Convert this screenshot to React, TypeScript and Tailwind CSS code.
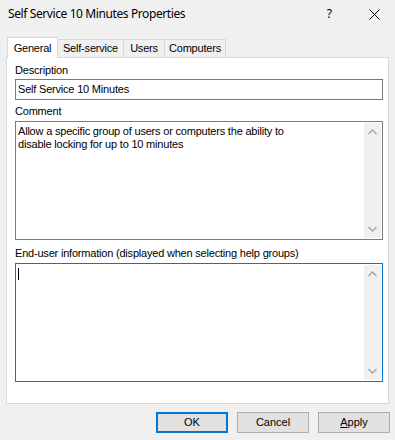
import type { ReactNode } from "react";

const uiFont = "font-['Liberation_Sans',Arial,sans-serif]";

function Chevron({ dir }: { dir: "up" | "down" }) {
  return (
    <svg width="9" height="6" viewBox="0 0 9 6" className="block">
      <polyline
        points={dir === "up" ? "0.5,5 4.5,1 8.5,5" : "0.5,1 4.5,5 8.5,1"}
        fill="none"
        stroke="#a3a3a3"
        strokeWidth="1.3"
      />
    </svg>
  );
}

function ScrollBar() {
  return (
    <div className="w-[17px] self-stretch bg-[#f0f0f0] flex flex-col items-center justify-between py-[6px]">
      <Chevron dir="up" />
      <Chevron dir="down" />
    </div>
  );
}

function TextArea({
  focused,
  children,
}: {
  focused?: boolean;
  children?: ReactNode;
}) {
  return (
    <div
      className={`h-[119px] w-[368px] bg-white border flex ${
        focused ? "border-[#0078d7]" : "border-[#7a7a7a]"
      }`}
    >
      <div className="flex-1 pl-[2px] pt-[3px] text-[11px] leading-[13px] text-black">
        {children}
      </div>
      <div className="p-px flex">
        <ScrollBar />
      </div>
    </div>
  );
}

function Tab({
  label,
  width,
  active,
}: {
  label: string;
  width: string;
  active?: boolean;
}) {
  return (
    <div
      className={`${width} border border-[#d9d9d9] border-b-0 text-[11px] tracking-[-0.2px] text-black flex items-center justify-center ${
        active
          ? "h-[21px] bg-white -mb-px relative z-10"
          : "h-[18px] bg-[#f0f0f0] -ml-px"
      }`}
    >
      {label}
    </div>
  );
}

function DialogButton({
  children,
  primary,
}: {
  children: ReactNode;
  primary?: boolean;
}) {
  return (
    <button
      className={`h-[21px] w-[72px] bg-[#e1e1e1] text-[11px] text-black flex items-center justify-center ${
        primary ? "border-2 border-[#0078d7]" : "border border-[#adadad]"
      }`}
    >
      {children}
    </button>
  );
}

export default function App() {
  return (
    <div className={`w-[395px] h-[440px] bg-[#f0f0f0] overflow-hidden ${uiFont}`}>
      {/* Title bar */}
      <div className="h-[30px] flex items-center justify-between pl-[8px] pr-[15px]">
        <span className="text-[12px] tracking-[-0.4px] text-black font-['Noto_Sans',sans-serif] pb-[2px]">
          Self Service 10 Minutes Properties
        </span>
        <div className="flex items-center gap-[37px]">
          <span className="text-[12px] text-black font-['Noto_Sans',sans-serif] pb-[2px]">
            ?
          </span>
          <svg width="11" height="11" viewBox="0 0 11 11" className="mb-[2px]">
            <path d="M0.5 0.5 L10.5 10.5 M10.5 0.5 L0.5 10.5" stroke="#000" strokeWidth="1" />
          </svg>
        </div>
      </div>

      {/* Tabs */}
      <div className="flex items-end pl-[7px] mt-[7px]">
        <Tab label="General" width="w-[51px]" active />
        <Tab label="Self-service" width="w-[67px]" />
        <Tab label="Users" width="w-[42px]" />
        <Tab label="Computers" width="w-[62px]" />
      </div>

      {/* Tab panel */}
      <div className="ml-[6px] w-[383px] h-[347px] bg-white border border-[#d9d9d9] pl-[8px] pt-[6px] flex flex-col text-[11px] tracking-[-0.2px] text-black">
        <div className="h-[13px] leading-[13px]">Description</div>
        <div className="mt-[2px] h-[21px] w-[368px] border border-[#7a7a7a] flex items-center pl-[2px]">
          Self Service 10 Minutes
        </div>
        <div className="mt-[5px] h-[13px] leading-[13px]">Comment</div>
        <div className="mt-[3px]">
          <TextArea>
            Allow a specific group of users or computers the ability to
            <br />
            disable locking for up to 10 minutes
          </TextArea>
        </div>
        <div className="mt-[7px] h-[13px] leading-[13px]">
          End-user information (displayed when selecting help groups)
        </div>
        <div className="mt-[3px]">
          <TextArea focused>
            <div className="w-px h-[12px] bg-black mt-[1px]" />
          </TextArea>
        </div>
      </div>

      {/* Buttons */}
      <div className="flex justify-end gap-[9px] pr-[5px] mt-[8px]">
        <DialogButton primary>OK</DialogButton>
        <DialogButton>Cancel</DialogButton>
        <DialogButton>
          <span>
            <span className="underline">A</span>pply
          </span>
        </DialogButton>
      </div>
    </div>
  );
}
